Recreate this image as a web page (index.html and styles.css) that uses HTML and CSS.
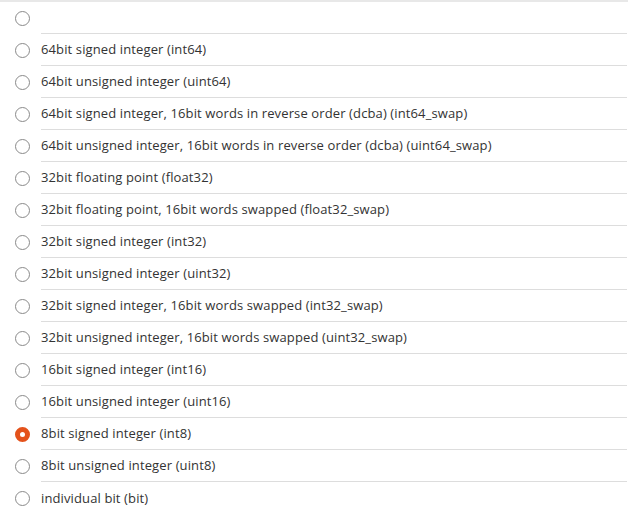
FILE: index.html
```html
<!DOCTYPE html>
<html>
<head>
<meta charset="utf-8">
<link rel="stylesheet" href="styles.css">
</head>
<body>
<div class="list">
  <label class="row"><span class="radio"></span><span class="text"></span></label>
  <label class="row"><span class="radio"></span><span class="text">64bit signed integer (int64)</span></label>
  <label class="row"><span class="radio"></span><span class="text">64bit unsigned integer (uint64)</span></label>
  <label class="row"><span class="radio"></span><span class="text">64bit signed integer, 16bit words in reverse order (dcba) (int64_swap)</span></label>
  <label class="row"><span class="radio"></span><span class="text">64bit unsigned integer, 16bit words in reverse order (dcba) (uint64_swap)</span></label>
  <label class="row"><span class="radio"></span><span class="text">32bit floating point (float32)</span></label>
  <label class="row"><span class="radio"></span><span class="text">32bit floating point, 16bit words swapped (float32_swap)</span></label>
  <label class="row"><span class="radio"></span><span class="text">32bit signed integer (int32)</span></label>
  <label class="row"><span class="radio"></span><span class="text">32bit unsigned integer (uint32)</span></label>
  <label class="row"><span class="radio"></span><span class="text">32bit signed integer, 16bit words swapped (int32_swap)</span></label>
  <label class="row"><span class="radio"></span><span class="text">32bit unsigned integer, 16bit words swapped (uint32_swap)</span></label>
  <label class="row"><span class="radio"></span><span class="text">16bit signed integer (int16)</span></label>
  <label class="row"><span class="radio"></span><span class="text">16bit unsigned integer (uint16)</span></label>
  <label class="row"><span class="radio checked"></span><span class="text">8bit signed integer (int8)</span></label>
  <label class="row"><span class="radio"></span><span class="text">8bit unsigned integer (uint8)</span></label>
  <label class="row last"><span class="radio"></span><span class="text">individual bit (bit)</span></label>
</div>
</body>
</html>
```

FILE: styles.css
```css
html, body {
  margin: 0;
  padding: 0;
  background: #ffffff;
}
body {
  font-family: "Open Sans", "Noto Sans", sans-serif;
  font-size: 13px;
  letter-spacing: 0.12px;
  color: #333333;
  width: 628px;
  overflow: hidden;
}
.list {
  border-top: 2px solid #e8e8e8;
  display: flex;
  flex-direction: column;
}
.row {
  display: flex;
  height: 32px;
}
.radio {
  flex: 0 0 41px;
  display: flex;
  align-items: center;
  justify-content: center;
}
.radio::before {
  content: "";
  width: 13px;
  height: 13px;
  border: 1px solid #8a8a8a;
  border-radius: 50%;
  margin-left: 3px;
  margin-top: 0;
  box-sizing: content-box;
}
.radio.checked::before {
  width: 5px;
  height: 5px;
  border: 5px solid #e4521b;
  background: #ffffff;
}
.text {
  flex: 1;
  display: flex;
  align-items: center;
  border-bottom: 1px solid #dddddd;
  padding-bottom: 1px;
  margin-right: 1px;
}
.row.last .text {
  border-bottom: none;
}
```
